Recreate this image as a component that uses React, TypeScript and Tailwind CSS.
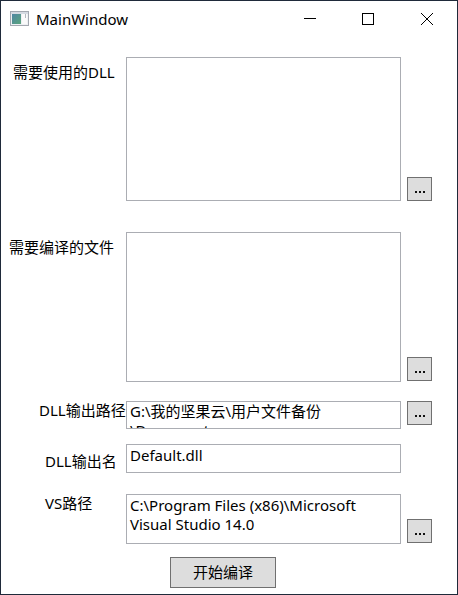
import { useState } from 'react';
import type { ReactNode } from 'react';

const fieldClass =
  'block w-full resize-none overflow-hidden rounded-none border border-[#abadb3] bg-white px-[3px] text-[15px] leading-[19px] text-black outline-none';

function BrowseButton({ label }: { label: string }) {
  return (
    <button
      type="button"
      aria-label={label}
      className="flex h-6 w-[25px] items-end justify-center border border-[#707070] bg-[#dddddd] pb-[7px]"
    >
      <svg width="11" height="2" viewBox="0 0 11 2" fill="#111" shapeRendering="crispEdges" aria-hidden="true">
        <rect x="1" width="2" height="2" />
        <rect x="5" width="2" height="2" />
        <rect x="9" width="2" height="2" />
      </svg>
    </button>
  );
}

type RowProps = {
  id: string;
  label: string;
  labelClass: string;
  browse?: ReactNode;
  children: ReactNode;
};

function Row({ id, label, labelClass, browse, children }: RowProps) {
  return (
    <div className="grid grid-cols-[125px_1fr_25px]">
      <label htmlFor={id} className={`whitespace-nowrap ${labelClass}`}>
        {label}
      </label>
      <div className="mr-1.5">{children}</div>
      {browse}
    </div>
  );
}

function AppIcon() {
  return (
    <svg width="19" height="16" viewBox="0 0 19 16" aria-hidden="true">
      <defs>
        <linearGradient id="pane" x1="0" y1="0" x2="1" y2="1">
          <stop offset="0" stopColor="#4f86a3" />
          <stop offset="1" stopColor="#5aa57c" />
        </linearGradient>
      </defs>
      <rect x="0.5" y="0.5" width="18" height="14" fill="#eef0f3" stroke="#a3a8b0" />
      <rect x="1" y="1" width="17" height="2" fill="#d5dae2" />
      <rect x="2" y="3" width="9" height="10" fill="url(#pane)" />
      <rect x="12" y="3" width="5" height="10" fill="#fafafa" />
      <rect x="15" y="3" width="1" height="4" fill="#b3b8c0" />
    </svg>
  );
}

export default function App() {
  const [dlls, setDlls] = useState('');
  const [files, setFiles] = useState('');
  const [outDir, setOutDir] = useState('G:\\我的坚果云\\用户文件备份\n\\Documents');
  const [outName, setOutName] = useState('Default.dll');
  const [vsPath, setVsPath] = useState('C:\\Program Files (x86)\\Microsoft Visual Studio 14.0');

  return (
    <div className="flex min-h-screen flex-col border border-[#1f2a3a] bg-white font-['Noto_Sans','Noto_Sans_CJK_SC',sans-serif] text-[15px] leading-[18px] text-black">
      <header className="flex h-9 items-center justify-between pl-[9px]">
        <div className="flex items-center gap-[7px]">
          <AppIcon />
          <h1>MainWindow</h1>
        </div>
        <div className="flex h-full">
          <button type="button" aria-label="Minimize" className="flex w-[58px] items-center justify-center">
            <svg width="12" height="12" viewBox="0 0 12 12" stroke="#000" aria-hidden="true">
              <path d="M0 5.5h12" />
            </svg>
          </button>
          <button type="button" aria-label="Maximize" className="flex w-[58px] items-center justify-center">
            <svg width="12" height="12" viewBox="0 0 12 12" fill="none" stroke="#000" aria-hidden="true">
              <rect x="0.5" y="0.5" width="11" height="11" />
            </svg>
          </button>
          <button type="button" aria-label="Close" className="flex w-[60px] items-center justify-center">
            <svg width="12" height="12" viewBox="0 0 12 12" stroke="#000" aria-hidden="true">
              <path d="M0 0L12 12M12 0L0 12" />
            </svg>
          </button>
        </div>
      </header>

      <main className="flex flex-col pt-5 pr-[25px]">
        <Row
          id="dlls"
          label="需要使用的DLL"
          labelClass="pt-1.5 pl-3"
          browse={
            <div className="self-end">
              <BrowseButton label="选择需要使用的DLL" />
            </div>
          }
        >
          <textarea id="dlls" className={`${fieldClass} h-36`} value={dlls} onChange={(e) => setDlls(e.target.value)} />
        </Row>
        <div className="mt-[31px]">
          <Row
            id="files"
            label="需要编译的文件"
            labelClass="pt-1.5 pl-2"
            browse={
              <div className="self-end pb-px">
                <BrowseButton label="选择需要编译的文件" />
              </div>
            }
          >
            <textarea id="files" className={`${fieldClass} h-[150px]`} value={files} onChange={(e) => setFiles(e.target.value)} />
          </Row>
        </div>
        <div className="mt-[19px]">
          <Row
            id="out-dir"
            label="DLL输出路径"
            labelClass="pl-[38px]"
            browse={
              <div className="self-start">
                <BrowseButton label="选择DLL输出路径" />
              </div>
            }
          >
            <textarea id="out-dir" className={`${fieldClass} h-7`} value={outDir} onChange={(e) => setOutDir(e.target.value)} />
          </Row>
        </div>
        <div className="mt-[15px]">
          <Row id="out-name" label="DLL输出名" labelClass="pt-2 pl-11">
            <input id="out-name" type="text" className={`${fieldClass} h-[29px] pb-2`} value={outName} onChange={(e) => setOutName(e.target.value)} />
          </Row>
        </div>
        <div className="mt-[21px]">
          <Row
            id="vs-path"
            label="VS路径"
            labelClass="pl-11"
            browse={
              <div className="self-end pb-px">
                <BrowseButton label="选择VS路径" />
              </div>
            }
          >
            <textarea id="vs-path" className={`${fieldClass} h-[50px] pt-px`} value={vsPath} onChange={(e) => setVsPath(e.target.value)} />
          </Row>
        </div>
        <button
          type="button"
          className="mt-[13px] ml-[13px] h-[31px] w-[106px] self-center border border-[#707070] bg-[#dddddd] pb-0.5"
        >
          开始编译
        </button>
      </main>
    </div>
  );
}
